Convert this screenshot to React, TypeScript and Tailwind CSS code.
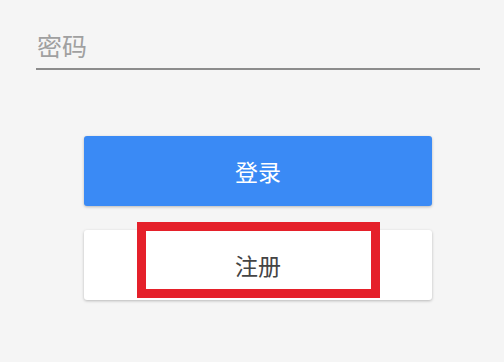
export default function App() {
  return (
    <div
      className="h-[362px] w-[504px] overflow-hidden bg-[#f5f5f5]"
      style={{ fontFamily: '"Noto Sans CJK SC", "Noto Sans", sans-serif' }}
    >
      {/* Password field */}
      <div className="ml-[36px] mr-[24px] pt-[27px]">
        <div className="border-b-2 border-[#8c8c8c] pb-[5px] pl-[1px] text-[25px] leading-[36px] text-[#a0a0a0]">
          密码
        </div>
      </div>

      {/* Actions */}
      <div className="ml-[84px] mr-[72px] mt-[66px] flex flex-col gap-[24px]">
        <button className="h-[70px] w-full rounded-[3px] bg-[#3a8af5] text-[23px] text-white shadow-[0_1px_3px_rgba(0,0,0,0.25)]">
          登录
        </button>
        <div className="relative">
          <button className="h-[70px] w-full rounded-[3px] bg-white text-[23px] text-[#444444] shadow-[0_1px_3px_rgba(0,0,0,0.25)]">
            注册
          </button>
          {/* annotation highlight */}
          <div className="pointer-events-none absolute left-[53px] top-[-8px] h-[76px] w-[243px] border-[9px] border-[#e5202a]" />
        </div>
      </div>
    </div>
  )
}
